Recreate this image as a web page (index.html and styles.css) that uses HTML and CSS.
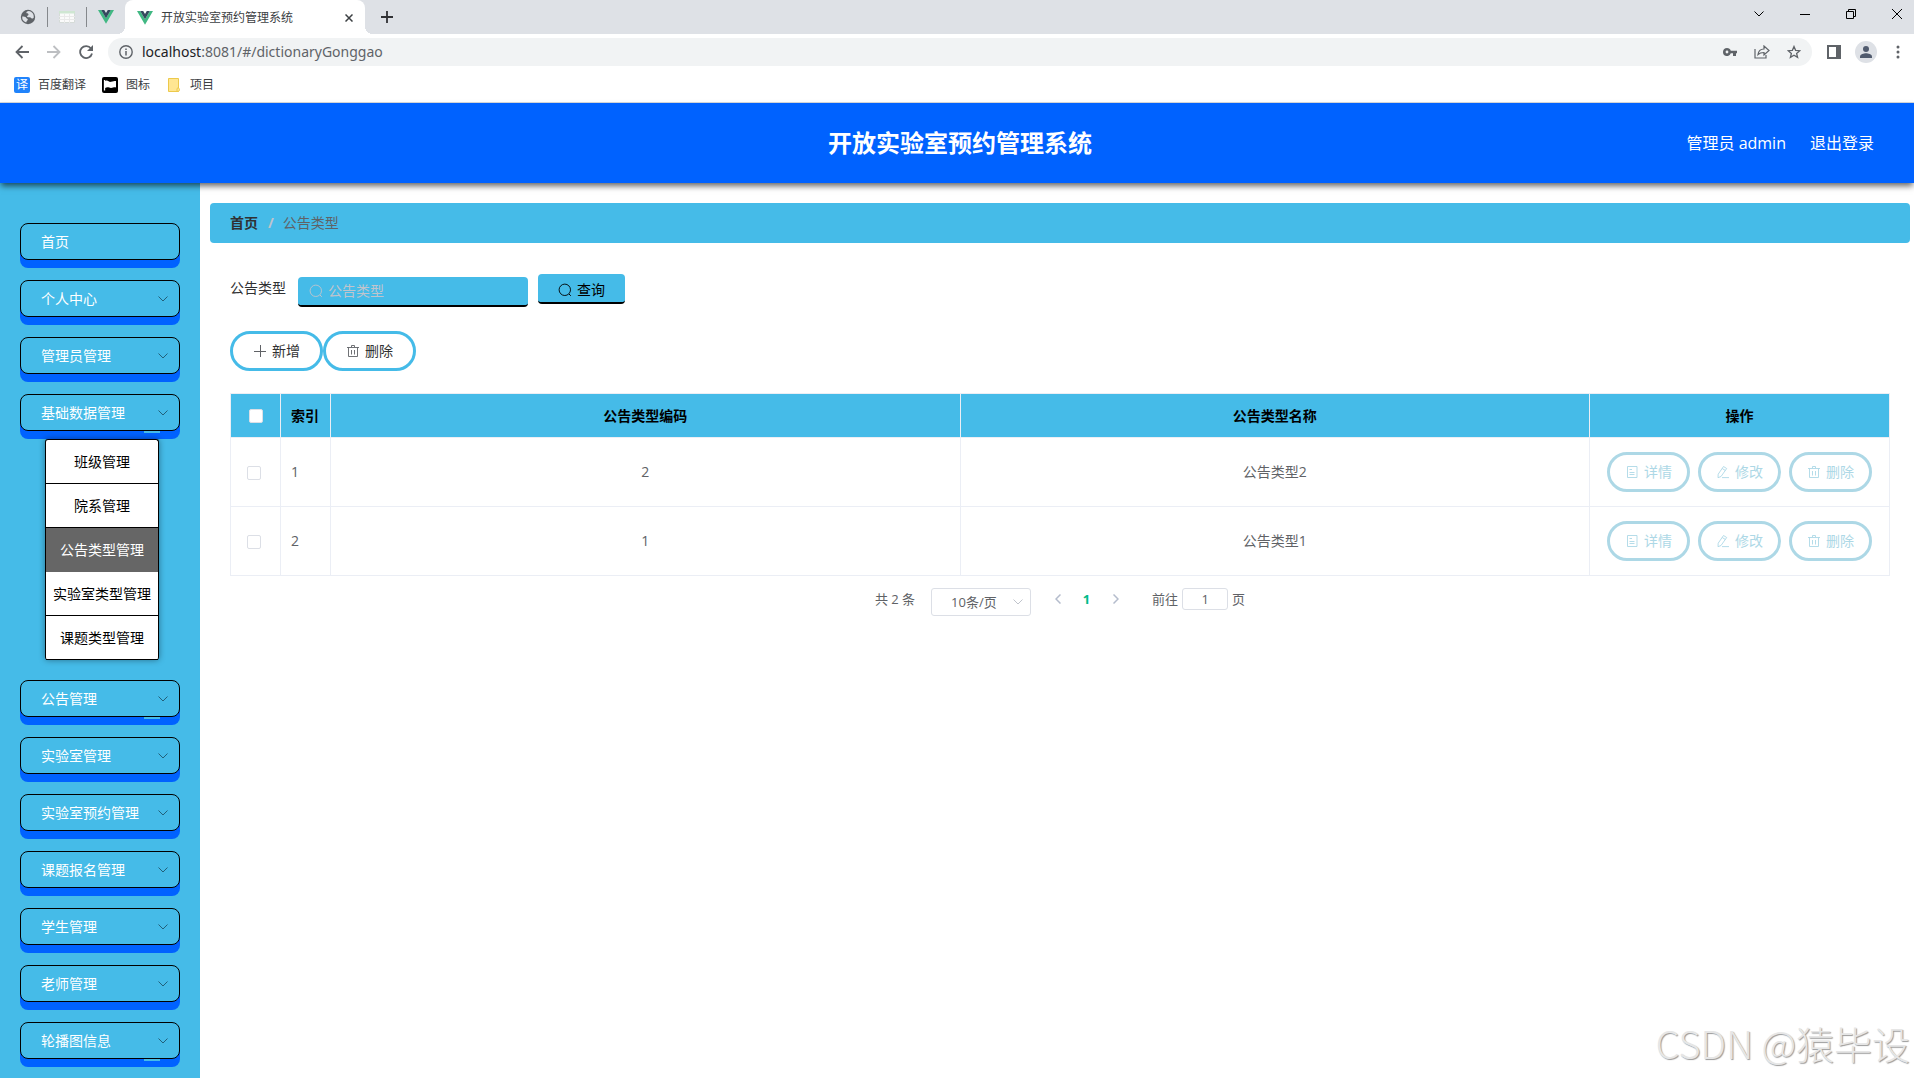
FILE: index.html
```
<!DOCTYPE html>
<html lang="zh-CN">
  <head>
    <meta charset="UTF-8" />
    <meta name="viewport" content="width=device-width, initial-scale=1.0" />
    <title>开放实验室预约管理系统</title>
    <link rel="stylesheet" href="styles.css">
  </head>
  <body>
    <!-- Icons used more than once -->
    <svg class="sprite" aria-hidden="true">
      <symbol id="vue" viewBox="0 0 16 14">
        <path d="M0 0h3.2L8 8.3 12.8 0H16L8 13.8z" fill="#41b883" />
        <path d="M3.2 0h3L8 3.1 9.8 0h3L8 8.3z" fill="#35495e" />
      </symbol>
      <symbol id="down" viewBox="0 0 10 6">
        <path d="M.5.5 5 5 9.500.5" fill="none" stroke="currentColor" />
      </symbol>
      <symbol id="search" viewBox="0 0 14 14">
        <circle cx="6.800" cy="6.800" r="5.700" fill="none" stroke="currentColor" stroke-width=".9" />
        <path d="m11 11 1.800 1.800" stroke="currentColor" />
      </symbol>
      <symbol id="trash" viewBox="0 0 14 14">
        <path d="M1 3.500h12M5.500 3V1.500h3V3M2.500 3.500v9h9v-9M5.500 6v4.500M8.500 6v4.500" fill="none" stroke="currentColor" stroke-width=".9" />
      </symbol>
      <symbol id="doc" viewBox="0 0 14 14">
        <path d="M2.500 1.500h9.500v11h-9.500zM4.500 4.500h2.500M4.500 7.500h5M4.500 9.500h5" fill="none" stroke="currentColor" stroke-width=".9" />
      </symbol>
      <symbol id="edit" viewBox="0 0 14 14">
        <path d="m7.500 1.500 3.200 2L5 11.500l-3 1.200.2-3.500zM6.200 3.500l3.200 2M6 12.600h7" fill="none" stroke="currentColor" stroke-width=".9" />
      </symbol>
    </svg>

    <!-- Browser window -->
    <div class="browser">
      <div class="tabs">
        <span class="pin">
          <svg width="16" height="16" viewBox="0 0 16 16"><circle cx="8" cy="8" r="7.200" fill="#5f6368" /><path d="M9 2c-2 .2-3 1.200-2.500 2s2 .2 2 1.500-1.500 1-1.500 2 2 .5 3 .8 1 1.200 2 1.200 1.500-.5 1.800-1A5.800 5.800 0 0 0 9 2zM2.200 7.500c1.500 0 3.300 0 4 1.200s1.800 1 1.600 2-1.300 1-1.600 2.800A5.900 5.900 0 0 1 2.200 7.500z" fill="#dee1e6" /></svg>
        </span>
        <span class="pin">
          <svg width="16" height="12" viewBox="0 0 16 12"><path d="M.5.5h15v11H.5z" fill="#fafafa" stroke="#d5dbd8" /><path d="M0 0h16v2.500H0z" fill="#cfe6d2" /><path d="M0 5.500h16M0 8.500h16M5.500 3v9M10.500 3v9" stroke="#e9e9e9" /></svg>
        </span>
        <span class="pin last"><svg width="16" height="14"><use href="#vue" /></svg></span>
        <div class="tab">
          <svg width="16" height="14"><use href="#vue" /></svg>
          <span>开放实验室预约管理系统</span>
          <button aria-label="关闭标签页"><svg width="8" height="8" viewBox="0 0 8 8"><path d="m.5.500 7 7m0-7-7 7" stroke="#3c4043" stroke-width="1.500" /></svg></button>
        </div>
        <button class="plus" aria-label="新标签页"><svg width="12" height="12" viewBox="0 0 12 12"><path d="M6 0v12M0 6h12" stroke="#303134" stroke-width="1.800" /></svg></button>
        <div class="window">
          <button aria-label="搜索标签页"><svg width="10" height="6"><use href="#down" /></svg></button>
          <button aria-label="最小化"><svg width="10" height="10" viewBox="0 0 10 10"><path d="M0 5.500h10" stroke="#000" /></svg></button>
          <button aria-label="还原"><svg width="10" height="10" viewBox="0 0 10 10"><path d="M.5 2.500h7v7h-7zM2.500 2.500v-2h7v7h-2" fill="none" stroke="#000" /></svg></button>
          <button aria-label="关闭"><svg width="10" height="10" viewBox="0 0 10 10"><path d="m0 0 10 10M10 0 0 10" stroke="#000" /></svg></button>
        </div>
      </div>
      <div class="toolbar">
        <button aria-label="后退"><svg width="14" height="14" viewBox="0 0 14 14"><path d="M14 7H1.500M7.500 1l-6 6 6 6" fill="none" stroke="#5f6368" stroke-width="1.800" /></svg></button>
        <button aria-label="前进"><svg width="14" height="14" viewBox="0 0 14 14"><path d="M0 7h12.500M6.500 1l6 6-6 6" fill="none" stroke="#bdbfc2" stroke-width="1.800" /></svg></button>
        <button aria-label="刷新"><svg width="14" height="14" viewBox="0 0 14 14"><path d="M12 3.500A6 6 0 1 0 13 8.500" fill="none" stroke="#5f6368" stroke-width="1.800" /><path d="M14 0v6H8z" fill="#5f6368" /></svg></button>
        <div class="address">
          <svg width="14" height="14" viewBox="0 0 14 14"><circle cx="7" cy="7" r="6.200" fill="none" stroke="#5f6368" stroke-width="1.400" /><path d="M7 6v4.500M7 3.500V5" stroke="#5f6368" stroke-width="1.500" /></svg>
          <p><b>localhost</b>:8081/#/dictionaryGonggao</p>
          <button aria-label="密码"><svg width="14" height="8" viewBox="0 0 14 8"><path fill-rule="evenodd" d="M4 0a4 4 0 0 1 3.800 2.800H14v2.500h-1V8h-3V5.300H7.800A4 4 0 1 1 4 0zm0 2.600a1.400 1.400 0 1 0 0 2.800 1.400 1.400 0 0 0 0-2.800z" fill="#5f6368" /></svg></button>
          <button aria-label="分享"><svg width="16" height="14" viewBox="0 0 16 14"><path d="M1 4v9h11v-3M4 9.500c.5-4 3-5.500 6-5.500V1l5 4.500-5 4.500V7.500c-3 0-4.500.5-6 2z" fill="none" stroke="#5f6368" stroke-width="1.200" /></svg></button>
          <button aria-label="收藏"><svg width="14" height="14" viewBox="0 0 14 14"><path d="m7 1.500 1.600 3.800 4.200.4-3.200 2.700 1 4L7 10.300l-3.600 2.100 1-4L1.200 5.700l4.200-.4z" fill="none" stroke="#5f6368" stroke-width="1.300" /></svg></button>
        </div>
        <button aria-label="侧边栏"><svg width="14" height="14" viewBox="0 0 14 14"><path d="M1 1h12v12H1z" fill="#fff" stroke="#5f6368" stroke-width="2" /><path d="M9 0h5v14H9z" fill="#5f6368" /></svg></button>
        <button aria-label="用户"><svg width="22" height="22" viewBox="0 0 22 22"><circle cx="11" cy="11" r="11" fill="#dee1e6" /><circle cx="11" cy="8" r="3" fill="#515b6e" /><path d="M5 17v-1.500C5 13 9 12.200 11 12.200s6 .8 6 3.300V17z" fill="#515b6e" /></svg></button>
        <button aria-label="菜单"><svg width="4" height="14" viewBox="0 0 4 14"><path d="M2 2h0M2 7h0M2 12h0" stroke="#5f6368" stroke-width="3" stroke-linecap="round" /></svg></button>
      </div>
      <div class="bookmarks">
        <a href="#"><span class="fanyi">译</span>百度翻译</a>
        <a href="#"><svg width="16" height="16" viewBox="0 0 16 16"><rect width="16" height="16" rx="2" /><path d="M2.500 3v10.500" stroke="#fff" stroke-width="1.300" /><path d="M3 4c3-1.500 4 1.500 6 .8S12 4 14 4v6.500c-2-.5-3 .5-5 .5s-3-1.500-6 0z" fill="#fff" /></svg>图标</a>
        <a href="#"><svg width="16" height="16" viewBox="0 0 16 16"><path d="M2.500 1.500h10v13h-10z" fill="#ffe692" stroke="#ecc94b" /><path d="M11 11.500c1-1 2.500-.5 2.500 1s-.5 2-2.500 2z" fill="#ffe692" stroke="#ecc94b" /></svg>项目</a>
      </div>
    </div>

    <header class="header">
      <h1>开放实验室预约管理系统</h1>
      <div class="user">
        <span>管理员 admin</span>
        <a href="#">退出登录</a>
      </div>
    </header>

    <div class="layout">
      <nav class="sidebar">
        <ul class="menu">
          <li><a class="item" href="#">首页</a></li>
          <li><button class="item">个人中心<svg width="10" height="6"><use href="#down" /></svg></button></li>
          <li><button class="item">管理员管理<svg width="10" height="6"><use href="#down" /></svg></button></li>
          <li>
            <button class="item mark">基础数据管理<svg width="10" height="6"><use href="#down" /></svg></button>
            <ul class="submenu">
              <li><a href="#">班级管理</a></li>
              <li><a href="#">院系管理</a></li>
              <li><a class="active" href="#">公告类型管理</a></li>
              <li><a href="#">实验室类型管理</a></li>
              <li><a href="#">课题类型管理</a></li>
            </ul>
          </li>
          <li><button class="item mark">公告管理<svg width="10" height="6"><use href="#down" /></svg></button></li>
          <li><button class="item">实验室管理<svg width="10" height="6"><use href="#down" /></svg></button></li>
          <li><button class="item">实验室预约管理<svg width="10" height="6"><use href="#down" /></svg></button></li>
          <li><button class="item">课题报名管理<svg width="10" height="6"><use href="#down" /></svg></button></li>
          <li><button class="item">学生管理<svg width="10" height="6"><use href="#down" /></svg></button></li>
          <li><button class="item">老师管理<svg width="10" height="6"><use href="#down" /></svg></button></li>
          <li><button class="item mark">轮播图信息<svg width="10" height="6"><use href="#down" /></svg></button></li>
        </ul>
      </nav>

      <main class="main">
        <div class="breadcrumb">
          <a href="#">首页</a><i>/</i><span>公告类型</span>
        </div>

        <div class="content">
          <form class="search">
            <label for="type">公告类型</label>
            <div class="field">
              <svg width="14" height="14"><use href="#search" /></svg>
              <input type="text" id="type" placeholder="公告类型" />
            </div>
            <button type="button"><svg width="14" height="14"><use href="#search" /></svg>查询</button>
          </form>

          <div class="actions">
            <button class="pill"><svg width="14" height="14" viewBox="0 0 14 14"><path d="M7.500 1v12M1 7.500h12" stroke="currentColor" /></svg>新增</button>
            <button class="pill"><svg width="14" height="14"><use href="#trash" /></svg>删除</button>
          </div>

          <table class="table">
            <colgroup>
              <col class="narrow"><col class="narrow"><col><col><col class="ops">
            </colgroup>
            <thead>
              <tr>
                <th class="check"><input type="checkbox" aria-label="全选" /></th>
                <th class="index">索引</th>
                <th>公告类型编码</th>
                <th>公告类型名称</th>
                <th>操作</th>
              </tr>
            </thead>
            <tbody>
              <tr>
                <td class="check"><input type="checkbox" aria-label="选择 1" /></td>
                <td class="index">1</td>
                <td>2</td>
                <td>公告类型2</td>
                <td>
                  <div class="row-actions">
                    <button class="pill light"><svg width="14" height="14"><use href="#doc" /></svg>详情</button>
                    <button class="pill light"><svg width="14" height="14"><use href="#edit" /></svg>修改</button>
                    <button class="pill light"><svg width="14" height="14"><use href="#trash" /></svg>删除</button>
                  </div>
                </td>
              </tr>
              <tr>
                <td class="check"><input type="checkbox" aria-label="选择 2" /></td>
                <td class="index">2</td>
                <td>1</td>
                <td>公告类型1</td>
                <td>
                  <div class="row-actions">
                    <button class="pill light"><svg width="14" height="14"><use href="#doc" /></svg>详情</button>
                    <button class="pill light"><svg width="14" height="14"><use href="#edit" /></svg>修改</button>
                    <button class="pill light"><svg width="14" height="14"><use href="#trash" /></svg>删除</button>
                  </div>
                </td>
              </tr>
            </tbody>
          </table>

          <div class="pagination">
            <span>共 2 条</span>
            <div class="size">
              <select aria-label="每页条数"><option>10条/页</option></select>
              <svg width="10" height="6"><use href="#down" /></svg>
            </div>
            <div class="pager">
              <button aria-label="上一页"><svg width="6" height="10" viewBox="0 0 6 10"><path d="M5.500.5 1 5l4.500 4.500" fill="none" stroke="currentColor" stroke-width="1.500" /></svg></button>
              <button class="current">1</button>
              <button aria-label="下一页"><svg width="6" height="10" viewBox="0 0 6 10"><path d="M.5.500 5 5 .5 9.500" fill="none" stroke="currentColor" stroke-width="1.500" /></svg></button>
            </div>
            <label class="jump">前往<input type="text" value="1" />页</label>
          </div>
        </div>
      </main>
    </div>

    <div class="watermark">CSDN @猿毕设</div>
  </body>
</html>
```
FILE: styles.css
```
* {
  box-sizing: border-box;
}
body {
  margin: 0;
  min-height: 100vh;
  display: flex;
  flex-direction: column;
  position: relative;
  font-family: "Open Sans", "Noto Sans CJK SC", sans-serif;
  font-size: 14px;
  line-height: 20px;
  color: #303133;
  background: #fff;
}
button,
input,
select {
  font: inherit;
  color: inherit;
  margin: 0;
}
button {
  padding: 0;
  border: none;
  background: none;
  cursor: pointer;
}
a {
  color: inherit;
  text-decoration: none;
}
ul {
  list-style: none;
  margin: 0;
  padding: 0;
}
svg {
  flex: none;
}
.sprite {
  position: absolute;
  width: 0;
  height: 0;
}

/* browser */
.browser {
  font-size: 12px;
  border-bottom: 1px solid #d5d8dc;
}
.tabs {
  display: flex;
  height: 34px;
  padding-left: 9px;
  background: #dee1e6;
}
.pin {
  display: flex;
  align-items: center;
  justify-content: center;
  width: 39px;
  height: 20px;
  margin-top: 7px;
  border-right: 1px solid #85888c;
}
.pin.last {
  width: 38px;
  border: none;
}
.tab {
  position: relative;
  display: flex;
  align-items: center;
  gap: 8px;
  width: 240px;
  padding: 1px 12px 0;
  border-radius: 8px 8px 0 0;
  background: #fff;
  color: #3c4043;
}
.tab::before,
.tab::after {
  content: "";
  position: absolute;
  bottom: 0;
  width: 8px;
  height: 8px;
}
.tab::before {
  left: -8px;
  background: radial-gradient(circle at 0 0, #dee1e6 8px, #fff 8px);
}
.tab::after {
  right: -8px;
  background: radial-gradient(circle at 100% 0, #dee1e6 8px, #fff 8px);
}
.tab button {
  display: flex;
  margin-left: auto;
}
.plus {
  display: flex;
  align-items: center;
  justify-content: center;
  width: 44px;
}
.window {
  display: flex;
  align-items: center;
  margin-left: auto;
  margin-right: -6px;
  padding-bottom: 6px;
}
.window button {
  width: 46px;
  height: 28px;
  display: flex;
  align-items: center;
  justify-content: center;
  color: #000;
}
.toolbar {
  display: flex;
  align-items: center;
  height: 36px;
  padding-left: 6px;
}
.toolbar button {
  display: flex;
  align-items: center;
  justify-content: center;
  width: 32px;
  height: 28px;
}
.address {
  flex: 1;
  display: flex;
  align-items: center;
  height: 28px;
  margin: 0 6px;
  padding: 0 2px 0 11px;
  border-radius: 14px;
  background: #f1f3f4;
  font-family: "Noto Sans", sans-serif;
  font-size: 14px;
  color: #5f6368;
}
.address p {
  flex: 1;
  margin: 0 0 0 9px;
}
.address b {
  font-weight: normal;
  color: #202124;
}
.bookmarks {
  display: flex;
  align-items: center;
  gap: 16px;
  height: 32px;
  padding: 0 14px 2px;
  color: #3c4043;
}
.bookmarks a {
  display: flex;
  align-items: center;
  gap: 8px;
}
.fanyi {
  width: 16px;
  height: 16px;
  line-height: 16px;
  border-radius: 2px;
  background: #2083fb;
  color: #fff;
  text-align: center;
}

/* header */
.header {
  position: relative;
  z-index: 1;
  display: grid;
  grid-template-columns: 1fr auto 1fr;
  align-items: center;
  height: 80px;
  padding: 0 40px 0 46px;
  background: #0062ff;
  color: #fff;
  box-shadow: 0 4px 6px -1px rgba(0, 0, 0, 0.6);
}
.header h1 {
  grid-column: 2;
  margin: 0;
  font-size: 24px;
  line-height: 32px;
}
.user {
  display: flex;
  justify-content: flex-end;
  gap: 24px;
  font-size: 16px;
}

/* sidebar */
.layout {
  flex: 1;
  display: flex;
}
.sidebar {
  flex: none;
  width: 200px;
  padding: 40px 20px 10px;
  background: #45bbe8;
}
.menu {
  display: flex;
  flex-direction: column;
  gap: 20px;
}
.item {
  position: relative;
  display: flex;
  align-items: center;
  justify-content: space-between;
  width: 100%;
  height: 37px;
  padding: 0 11px 0 20px;
  border: 1px solid #000;
  border-radius: 8px;
  background: #45bbe8;
  box-shadow: 0 8px 0 #0062ff;
  color: #fff;
}
.item svg {
  color: #22607a;
}
.mark::after {
  content: "";
  position: absolute;
  right: 19px;
  bottom: -3px;
  width: 16px;
  height: 2px;
  background: #45bbe8;
}
.submenu {
  position: relative;
  width: 114px;
  margin: 8px 0 0 25px;
  border: 1px solid #000;
  border-bottom: none;
  border-radius: 3px;
  background: #fff;
  box-shadow: 0 0 6px rgba(0, 0, 0, 0.4);
  color: #000;
}
.submenu a {
  display: block;
  height: 44px;
  line-height: 43px;
  border-bottom: 1px solid #000;
  text-align: center;
  white-space: nowrap;
}
.submenu .active {
  background: #666;
  border-color: #666;
  color: #fff;
}

/* main */
.main {
  flex: 1;
  padding: 20px 4px 20px 10px;
}
.breadcrumb {
  display: flex;
  align-items: center;
  height: 40px;
  padding: 0 20px;
  border-radius: 4px;
  background: #45bbe8;
  color: #606266;
}
.breadcrumb a {
  font-weight: bold;
  color: #303133;
}
.breadcrumb i {
  margin: 0 9px 0 10px;
  font-style: normal;
  font-weight: bold;
  color: #c0c4cc;
}
.content {
  padding: 31px 20px 0;
}
.search {
  display: flex;
  align-items: flex-start;
}
.search label {
  margin-right: 12px;
  line-height: 28px;
}
.field {
  display: flex;
  align-items: center;
  gap: 5px;
  width: 230px;
  height: 30px;
  margin: 3px 10px 0 0;
  padding: 0 11px;
  border-bottom: 2px solid #000;
  border-radius: 4px;
  background: #45bbe8;
  color: #c0c4cc;
}
.field input {
  width: 100%;
  padding: 0;
  border: none;
  outline: none;
  background: none;
}
.field input::placeholder {
  color: #c0c4cc;
}
.search button {
  display: flex;
  align-items: center;
  gap: 5px;
  height: 30px;
  padding: 4px 20px 0;
  border-bottom: 2px solid #000;
  border-radius: 4px;
  background: #45bbe8;
  color: #000;
}
.actions {
  display: flex;
  margin: 24px 0 22px;
}
.pill {
  display: flex;
  align-items: center;
  gap: 5px;
  height: 40px;
  padding: 0 20px;
  border: 3px solid #45bbe8;
  border-radius: 20px;
  background: #fff;
}
.pill svg {
  color: #606266;
}
.pill.light {
  padding: 0 15px;
  border-color: #add8e6;
  color: #add8e6;
}
.pill.light svg {
  color: #add8e6;
}

/* table */
.table {
  width: 100%;
  table-layout: fixed;
  border-collapse: collapse;
  color: #606266;
}
.narrow {
  width: 50px;
}
.ops {
  width: 300px;
}
.table th,
.table td {
  height: 69px;
  padding: 0 10px;
  border: 1px solid #ebeef5;
  text-align: center;
}
.table th {
  height: 44px;
  padding: 0;
  background: #45bbe8;
  color: #000;
}
.table .index {
  padding-left: 10px;
  text-align: left;
  white-space: nowrap;
}
.table td.check {
  padding: 2px 14px 0 10px;
}
.check input {
  appearance: none;
  display: block;
  width: 14px;
  height: 14px;
  margin: 0 auto;
  border: 1px solid #dcdfe6;
  border-radius: 2px;
  background: #fff;
}
.row-actions {
  display: flex;
  justify-content: center;
  gap: 8px;
}
.table td:last-child {
  padding: 0;
}

/* pagination */
.pagination {
  display: flex;
  justify-content: center;
  align-items: flex-start;
  padding: 12px 0;
  font-size: 13px;
  line-height: 22px;
  color: #606266;
}
.size {
  position: relative;
  margin: 0 12px 0 16px;
}
.size select {
  appearance: none;
  width: 100px;
  height: 28px;
  padding: 0 19px;
  border: 1px solid #dcdfe6;
  border-radius: 3px;
  background: #fff;
}
.size svg {
  position: absolute;
  right: 8px;
  top: 11px;
  color: #c0c4cc;
}
.pager {
  display: flex;
}
.pager button {
  display: flex;
  align-items: center;
  justify-content: center;
  width: 29px;
  height: 22px;
  color: #b4bccc;
}
.pager .current {
  font-weight: bold;
  color: #00bb88;
}
.jump {
  display: flex;
  gap: 4px;
  margin-left: 22px;
}
.jump input {
  width: 46px;
  height: 22px;
  padding: 0;
  border: 1px solid #dcdfe6;
  border-radius: 3px;
  text-align: center;
}

.watermark {
  position: absolute;
  right: 4px;
  bottom: 10px;
  font-family: "Noto Sans CJK SC", sans-serif;
  font-size: 38px;
  font-weight: 300;
  line-height: 50px;
  color: #e6e6e6;
  text-shadow: 1px 1px 1px #999;
}
```
